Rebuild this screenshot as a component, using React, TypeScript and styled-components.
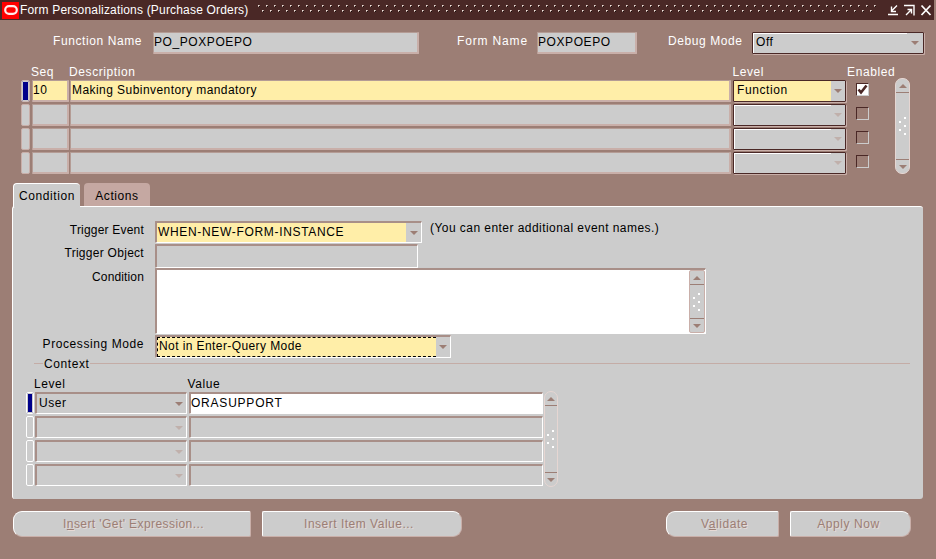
import React from 'react';
import styled, { createGlobalStyle, css } from 'styled-components';

const Global = createGlobalStyle`
  html, body { margin: 0; padding: 0; background: #9c7e75; }
  * { box-sizing: border-box; }
`;

const Page = styled.div`
  width: 936px; height: 559px; overflow: hidden;
  background: #9c7e75; color: #fff;
  font-family: "Liberation Sans", Arial, sans-serif; font-size: 12px; letter-spacing: 0.58px;
  display: flex; flex-direction: column;
`;

const TitleBar = styled.div`
  width: 934px; height: 20px; background: #4a2826; display: flex; align-items: center; flex: none;
`;
const LogoBox = styled.div`
  width: 17px; height: 17px; margin-left: 2px; background: #ff0000;
  display: flex; align-items: center; justify-content: center; flex: none;
`;
const TitleText = styled.div`
  margin-left: 1px; color: #fff; white-space: nowrap; line-height: 20px; letter-spacing: 0.18px; width: 238px; flex: none;
`;
const Dots = styled.svg`
  flex: 1; min-width: 0; height: 10px;
`;
const WinIcons = styled.svg`
  margin-left: 9px; margin-right: 2px; width: 46px; height: 14px; flex: none;
`;

const HeaderRow = styled.div`
  display: flex; align-items: flex-start; margin-top: 12px; height: 22px; flex: none;
`;
const HeadLabel = styled.div<{ $w: number; $ml?: number; $ls?: number }>`
  width: ${p => p.$w}px; margin-left: ${p => p.$ml ?? 0}px; text-align: right;
  line-height: 18px; white-space: nowrap; flex: none;
  ${p => p.$ls !== undefined && `letter-spacing: ${p.$ls}px;`}
`;

const bevelBrown = css`
  border-top: 1px solid #b49c95; border-left: 1px solid #b49c95;
  border-right: 2px solid #c9afa9; border-bottom: 2px solid #c9afa9;
`;
const bevelGrey = css`
  border-top: 2px solid #a88f88; border-left: 2px solid #a88f88;
  border-right: 1px solid #fff; border-bottom: 1px solid #fff;
`;
const bevelCombo = css`
  border: 1px solid #4a2826; box-shadow: 1px 1px 0 #c9afa9, inset 1px 1px 0 #fff;
`;

const Field = styled.div<{ $w?: number; $h?: number; $ml?: number; $bg?: string; $tone?: 'brown' | 'grey' | 'combo' }>`
  ${p => (p.$w ? `width: ${p.$w}px;` : 'flex: 1;')}
  height: ${p => p.$h ?? 22}px;
  margin-left: ${p => p.$ml ?? 0}px;
  background: ${p => p.$bg ?? '#cccccc'};
  ${p => (p.$tone === 'grey' ? bevelGrey : p.$tone === 'combo' ? bevelCombo : bevelBrown)}
  border-radius: 1px;
  color: #000; line-height: 19px; white-space: nowrap; overflow: hidden;
  flex-shrink: 0; display: flex; align-items: stretch; position: relative;
`;
const FieldText = styled.span<{ $bg?: string; $dashed?: boolean; $pl?: number; $ls?: number }>`
  flex: 1; padding-left: ${p => p.$pl ?? 1}px; line-height: 18px;
  ${p => p.$ls !== undefined && `letter-spacing: ${p.$ls}px;`}
  ${p => p.$bg && `background: ${p.$bg};`}
  ${p => p.$dashed && 'border-top: 1px dashed #000; border-bottom: 1px dashed #000; border-left: 1px dashed #000; line-height: 16px;'}
`;
const ArrowCell = styled.span<{ $w: number }>`
  width: ${p => p.$w}px; flex: none; display: flex; align-items: center; justify-content: center;
  background: #cccccc;
`;
const Tri = styled.i<{ $light?: boolean; $up?: boolean }>`
  width: 0; height: 0; display: block;
  border-left: 4px solid transparent; border-right: 4px solid transparent;
  ${p => (p.$up ? 'border-bottom' : 'border-top')}: 4px solid ${p => (p.$light ? '#c0b0ab' : '#9c7e75')};
`;

const GridHead = styled.div`
  display: flex; margin-top: 12px; height: 12px; line-height: 12px; flex: none;
`;
const ColHead = styled.div<{ $ml: number }>`
  margin-left: ${p => p.$ml}px; white-space: nowrap; flex: none;
`;
const GridArea = styled.div`
  display: flex; margin-top: 2px; margin-left: 21px; flex: none;
`;
const Rows = styled.div`
  display: flex; flex-direction: column; gap: 2px;
`;
const Row = styled.div`
  display: flex; align-items: center; height: 22px;
`;
const Indicator = styled.div<{ $on?: boolean; $w?: number; $grey?: boolean }>`
  width: ${p => p.$w ?? 9}px; height: 22px; flex: none; border-radius: 2px;
  background: #cccccc;
  border: 1px solid ${p => (p.$grey ? '#fff' : '#c9afa9')};
  ${p => p.$on && 'background: #00008b; box-shadow: 0 0 0 1px #cccccc inset;'}
  ${p => p.$on && !p.$grey && 'border: 1px solid #cdb9b4;'}
`;
const CheckBox = styled.div<{ $on?: boolean }>`
  width: 13px; height: 13px; margin: 3px 0 0 10px; flex: none; align-self: flex-start;
  border-top: 1px solid #4a2826; border-left: 1px solid #4a2826;
  border-right: 1px solid #cccccc; border-bottom: 1px solid #cccccc;
  ${p => p.$on && 'background: #fff;'}
  display: flex; align-items: center; justify-content: center;
`;

const Scroll = styled.div<{ $h: number; $w: number; $ml: number; $mt?: number; $flat?: boolean }>`
  width: ${p => p.$w}px; height: ${p => p.$h}px; margin-left: ${p => p.$ml}px; margin-top: ${p => p.$mt ?? 0}px; flex: none;
  background: #cccccc; border: 1px solid ${p => (p.$flat ? '#c9afa9' : '#e6d6d2')};
  border-radius: ${p => (p.$flat ? 2 : 7)}px;
  display: flex; flex-direction: column; align-items: stretch;
`;
const ScrollEnd = styled.div<{ $bottom?: boolean }>`
  height: 14px; flex: none; display: flex; align-items: center; justify-content: center;
  ${p => (p.$bottom ? 'border-top' : 'border-bottom')}: 1px solid #9c7e75;
`;
const ScrollMid = styled.div`
  flex: 1; display: flex; align-items: center; justify-content: center;
`;

const TabsRow = styled.div`
  display: flex; margin: 9px 0 0 13px; height: 23px; flex: none; position: relative; z-index: 1; gap: 4px;
`;
const Tab = styled.div<{ $active?: boolean; $w: number }>`
  width: ${p => p.$w}px; color: #000; text-align: center; line-height: 26px;
  border-radius: 4px 4px 0 0;
  background: ${p => (p.$active ? '#cccccc' : '#c5a8a2')};
  ${p => p.$active && 'border-top: 1px solid #fff; border-left: 1px solid #fff; line-height: 24px; height: 24px;'}
`;
const Panel = styled.div`
  margin-left: 12px; width: 911px; height: 293px; flex: none;
  background: #cccccc; border-top: 1px solid #fff; border-left: 1px solid #fff; border-radius: 3px;
  color: #000; display: flex; flex-direction: column;
`;
const FormRow = styled.div<{ $mt: number; $h: number }>`
  display: grid; grid-template-columns: 131px auto auto; column-gap: 11px; justify-content: start;
  margin-top: ${p => p.$mt}px; height: ${p => p.$h}px; flex: none;
`;
const FormLabel = styled.div<{ $ls?: number }>`
  text-align: right; line-height: 18px; white-space: nowrap;
  ${p => p.$ls !== undefined && `letter-spacing: ${p.$ls}px;`}
`;
const Hint = styled.div`
  line-height: 15px; margin-left: -3px; white-space: nowrap; letter-spacing: 0.45px;
`;
const TextArea = styled(Field)`
  justify-content: flex-end; background: #fff;
`;
const Legend = styled.div`
  display: flex; align-items: flex-start; height: 13px; margin: 0 13px 0 21px; flex: none;
`;
const LegendLine = styled.div<{ $w?: number }>`
  ${p => (p.$w ? `width: ${p.$w}px;` : 'flex: 1;')}
  height: 1px; margin-top: 5px; background: #c4aca6;
`;
const LegendText = styled.div`
  line-height: 13px; padding: 0 1px; white-space: nowrap;
`;
const SubHead = styled.div`
  display: flex; height: 12px; margin-top: 6px; line-height: 14px; flex: none;
`;
const SubGrid = styled.div`
  display: flex; margin: 3px 0 0 13px; flex: none;
`;

const Footer = styled.div`
  display: flex; margin: 12px 0 0 13px; flex: none;
`;
const Btn = styled.div<{ $w: number; $ml?: number; $left?: boolean; $right?: boolean; $pl?: number; $pr?: number; $ls?: number }>`
  width: ${p => p.$w}px; height: 26px; margin-left: ${p => p.$ml ?? 0}px; flex: none;
  padding: 0 ${p => p.$pr ?? 0}px 0 ${p => p.$pl ?? 0}px;
  ${p => p.$ls !== undefined && `letter-spacing: ${p.$ls}px;`}
  background: #cccccc; color: #9c7e75; text-align: center; line-height: 24px;
  border-top: 1px solid #fff; border-left: 1px solid #fff;
  border-right: 1px solid #c9afa9; border-bottom: 1px solid #c9afa9;
  border-radius: ${p => (p.$left ? 9 : 2)}px ${p => (p.$right ? 9 : 2)}px ${p => (p.$right ? 9 : 2)}px ${p => (p.$left ? 9 : 2)}px;
  text-shadow: 1px 1px 0 #e6dad6;
`;
const Key = styled.u``;

const Grip = () => (
  <svg width="12" height="20" viewBox="0 0 12 20" shapeRendering="crispEdges">
    {[[7, 1], [2, 5], [7, 9], [2, 13], [7, 17]].map(([x, y]) => (
      <rect key={`${x}-${y}`} x={x} y={y} width="2" height="2" fill="#fff" />
    ))}
  </svg>
);

const ScrollBar = ({ h, w, ml, mt, flat }: { h: number; w: number; ml: number; mt?: number; flat?: boolean }) => (
  <Scroll $h={h} $w={w} $ml={ml} $mt={mt} $flat={flat}>
    <ScrollEnd><Tri $up /></ScrollEnd>
    <ScrollMid><Grip /></ScrollMid>
    <ScrollEnd $bottom><Tri /></ScrollEnd>
  </Scroll>
);

const GridRow = ({ on }: { on?: boolean }) => (
  <Row>
    <Indicator $on={on} />
    <Field $w={37} $ml={2} $bg={on ? '#ffeea8' : undefined}>{on ? <FieldText $pl={0}>10</FieldText> : null}</Field>
    <Field $w={661} $ml={1} $bg={on ? '#ffeea8' : undefined}>{on ? <FieldText $ls={0.44}>Making Subinventory mandatory</FieldText> : null}</Field>
    <Field $w={113} $ml={2} $tone="combo">
      <FieldText $pl={3} $bg={on ? '#ffeea8' : undefined}>{on ? 'Function' : ''}</FieldText>
      <ArrowCell $w={14}><Tri $light={!on} /></ArrowCell>
    </Field>
    <CheckBox $on={on}>
      {on && (
        <svg width="11" height="11" viewBox="0 0 11 11">
          <path d="M1.5 5.5 L4 8.5 L9.5 1.5" fill="none" stroke="#4a2826" strokeWidth="2.6" />
        </svg>
      )}
    </CheckBox>
  </Row>
);

const SubRow = ({ on }: { on?: boolean }) => (
  <Row>
    <Indicator $on={on} $w={8} $grey />
    <Field $w={152} $ml={1} $tone="grey">
      <FieldText $pl={2}>{on ? 'User' : ''}</FieldText>
      <ArrowCell $w={14}><Tri $light={!on} /></ArrowCell>
    </Field>
    <Field $w={354} $ml={2} $tone="grey" $bg={on ? '#fff' : undefined}>
      <FieldText $pl={0} $ls={0.78}>{on ? 'ORASUPPORT' : ''}</FieldText>
    </Field>
  </Row>
);

export default function App() {
  return (
    <Page>
      <Global />
      <TitleBar>
        <LogoBox>
          <svg width="14" height="10" viewBox="0 0 14 10">
            <rect x="1.2" y="1.2" width="11.6" height="7.6" rx="3.8" fill="none" stroke="#fff" strokeWidth="2.2" opacity="0.92" />
          </svg>
        </LogoBox>
        <TitleText>Form Personalizations (Purchase Orders)</TitleText>
        <Dots>
          <defs>
            <pattern id="dotTile" width="8" height="10" patternUnits="userSpaceOnUse">
              <rect x="0" y="0" width="1" height="1" fill="#efe4e0" />
              <rect x="1" y="0" width="1" height="1" fill="#b89f98" />
              <rect x="0" y="1" width="1" height="1" fill="#b89f98" />
              <rect x="1" y="1" width="1" height="1" fill="#140a09" />
              <rect x="4" y="5" width="1" height="1" fill="#efe4e0" />
              <rect x="5" y="5" width="1" height="1" fill="#b89f98" />
              <rect x="4" y="6" width="1" height="1" fill="#b89f98" />
              <rect x="5" y="6" width="1" height="1" fill="#140a09" />
            </pattern>
          </defs>
          <rect width="100%" height="10" fill="url(#dotTile)" />
        </Dots>
        <WinIcons viewBox="0 0 46 14">
          <g fill="none" stroke="#fff" strokeWidth="1.4">
            <path d="M2 11.5H12M11 2.5L6 7.5M5.5 3.5V8.5H10" />
            <path d="M18 2.5H28V12.5M20 12L25 7M21.5 6.5H25.5V10.5" />
            <path d="M35.5 2.5L44.5 12M44.5 2.5L35.5 12" strokeWidth="1.8" />
          </g>
        </WinIcons>
      </TitleBar>

      <HeaderRow>
        <HeadLabel $w={142}>Function Name</HeadLabel>
        <Field $w={266} $ml={11}><FieldText $pl={0}>PO_POXPOEPO</FieldText></Field>
        <HeadLabel $w={71} $ml={38} $ls={0.85}>Form Name</HeadLabel>
        <Field $w={100} $ml={9}><FieldText $pl={0}>POXPOEPO</FieldText></Field>
        <HeadLabel $w={74} $ml={31}>Debug Mode</HeadLabel>
        <Field $w={172} $ml={10} $tone="combo">
          <FieldText $pl={3}>Off</FieldText>
          <ArrowCell $w={16}><Tri /></ArrowCell>
        </Field>
      </HeaderRow>

      <GridHead>
        <ColHead $ml={31}>Seq</ColHead>
        <ColHead $ml={15}>Description</ColHead>
        <ColHead $ml={597}>Level</ColHead>
        <ColHead $ml={83}>Enabled</ColHead>
      </GridHead>
      <GridArea>
        <Rows>
          <GridRow on />
          <GridRow />
          <GridRow />
          <GridRow />
        </Rows>
        <ScrollBar h={96} w={15} ml={26} mt={-2} />
      </GridArea>

      <TabsRow>
        <Tab $active $w={67}>Condition</Tab>
        <Tab $w={66}>Actions</Tab>
      </TabsRow>
      <Panel>
        <FormRow $mt={14} $h={22}>
          <FormLabel $ls={0.2}>Trigger Event</FormLabel>
          <Field $w={267} $h={22} $tone="grey">
            <FieldText $bg="#ffeea8" $ls={0.67}>WHEN-NEW-FORM-INSTANCE</FieldText>
            <ArrowCell $w={15}><Tri /></ArrowCell>
          </Field>
          <Hint>(You can enter additional event names.)</Hint>
        </FormRow>
        <FormRow $mt={1} $h={24}>
          <FormLabel $ls={0.28}>Trigger Object</FormLabel>
          <Field $w={263} $h={24} $tone="grey" />
        </FormRow>
        <FormRow $mt={0} $h={66}>
          <FormLabel $ls={0.14}>Condition</FormLabel>
          <TextArea $w={551} $h={66} $tone="grey">
            <ScrollBar h={63} w={16} ml={0} flat />
          </TextArea>
        </FormRow>
        <FormRow $mt={1} $h={23}>
          <FormLabel>Processing Mode</FormLabel>
          <Field $w={296} $h={23} $tone="grey">
            <FieldText $bg="#ffeea8" $dashed $ls={0.41}>Not in Enter-Query Mode</FieldText>
            <ArrowCell $w={14}><Tri /></ArrowCell>
          </Field>
        </FormRow>
        <Legend>
          <LegendLine $w={9} />
          <LegendText>Context</LegendText>
          <LegendLine />
        </Legend>
        <SubHead>
          <ColHead $ml={21}>Level</ColHead>
          <ColHead $ml={122}>Value</ColHead>
        </SubHead>
        <SubGrid>
          <Rows>
            <SubRow on />
            <SubRow />
            <SubRow />
            <SubRow />
          </Rows>
          <ScrollBar h={96} w={14} ml={1} mt={-1} />
        </SubGrid>
      </Panel>

      <Footer>
        <Btn $w={238} $left $pl={3} $ls={0.42}>I<Key>n</Key>sert 'Get' Expression...</Btn>
        <Btn $w={200} $ml={11} $right $pr={6} $ls={0.5}>Insert Item Value...</Btn>
        <Btn $w={113} $ml={204} $left $pl={4}>V<Key>a</Key>lidate</Btn>
        <Btn $w={121} $ml={11} $right $pr={4}>Apply Now</Btn>
      </Footer>
    </Page>
  );
}
